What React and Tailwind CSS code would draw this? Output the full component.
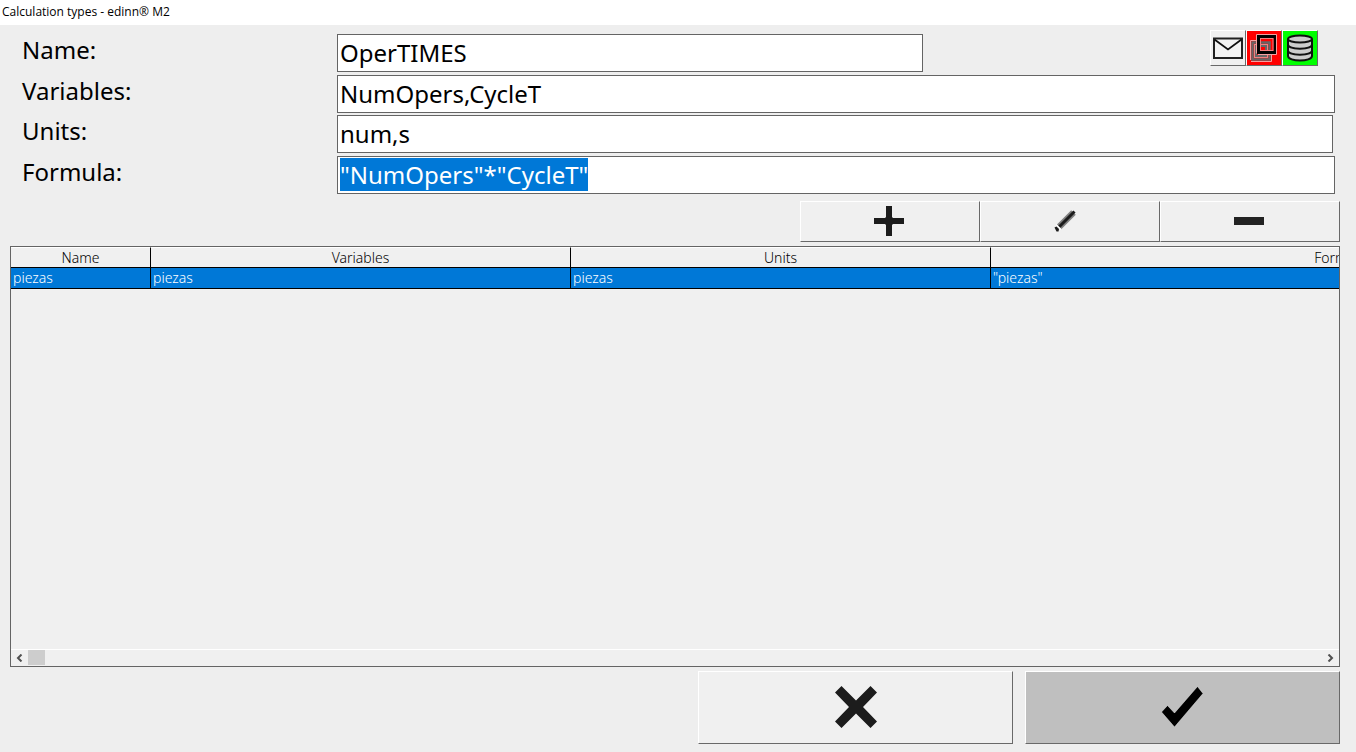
import { useEffect, useRef } from 'react';

const fields = [
  { id: 'name', label: 'Name:', value: 'OperTIMES', row: '', box: 'w-[586px]' },
  { id: 'variables', label: 'Variables:', value: 'NumOpers,CycleT', row: 'mt-[3px]', box: 'flex-1 mr-[21px]' },
  { id: 'units', label: 'Units:', value: 'num,s', row: 'mt-[2px]', box: 'flex-1 mr-[23px]' },
  { id: 'formula', label: 'Formula:', value: '"NumOpers"*"CycleT"', row: 'mt-[3px]', box: 'flex-1 mr-[21px]' },
];

const columns = [
  { title: 'Name', width: 'w-[140px]' },
  { title: 'Variables', width: 'w-[420px]' },
  { title: 'Units', width: 'w-[420px]' },
  { title: 'Formula', width: 'w-[700px]' },
];

const rows = [['piezas', 'piezas', 'piezas', '"piezas"']];

const raised = 'border border-t-white border-l-white border-r-[#696969] border-b-[#696969]';

/* ── Status icons ── */
function MailIcon() {
  return (
    <svg width="30" height="22" viewBox="0 0 30 22" fill="none" stroke="#111" strokeWidth="2">
      <rect x="1" y="1.500" width="28" height="19.500" fill="#f4f4f4" stroke="#222" />
      <path d="M1.500 2.500 L15 12.500 L28.500 2.500" strokeWidth="1.800" />
    </svg>
  );
}

function WindowsIcon() {
  return (
    <svg width="28" height="28" viewBox="0 0 28 28" fill="none">
      {/* back frame */}
      <rect x="2.500" y="8.500" width="17" height="17" stroke="#666" strokeWidth="2.500" />
      <path d="M0.500 26V6.500H7M21.500 20V27.500H1" stroke="#f3a0a0" />
      <rect x="4.500" y="10.500" width="13" height="13" stroke="#f08080" />
      <rect x="6" y="12" width="10" height="10" stroke="#666" strokeWidth="2" />
      {/* front frame */}
      <rect x="8.500" y="2.500" width="16.500" height="16" stroke="#000" strokeWidth="3" />
      <path d="M6.500 19.500V0.500H26.500V20.500H8" stroke="#f3a0a0" />
      <rect x="10.500" y="4.500" width="12.500" height="12" stroke="#f08080" />
    </svg>
  );
}

function DatabaseIcon() {
  return (
    <svg width="28" height="28" viewBox="0 0 28 28" fill="none" stroke="#111" strokeWidth="2">
      <path d="M2 5V22C2 28 26 28 26 22V5" fill="#ccc" />
      <ellipse cx="14" cy="5" rx="12" ry="3.5" fill="#ccc" />
      <path d="M2 10.5C2 16 26 16 26 10.5M2 16.5C2 22 26 22 26 16.5" />
    </svg>
  );
}

/* ── Action icons ── */
function PencilIcon() {
  return (
    <svg width="22" height="22" viewBox="0 0 22 22">
      <path d="M5 17 L19.500 2.500" stroke="#808080" strokeWidth="6.500" />
      <path d="M5 17 L20.500 1.500" stroke="#1c1c1c" strokeWidth="3" />
      <path d="M2 14.500 L7 19.500" stroke="#fff" strokeWidth="1.500" />
      <path d="M0.500 17.500 L2.500 16.500 L5 19 L4.500 21.500 H2.500 Z" fill="#1c1c1c" />
    </svg>
  );
}

function Arrow({ d }) {
  return (
    <svg width="7" height="8" viewBox="0 0 7 8" fill="none" stroke="#505050" strokeWidth="2">
      <path d={d} />
    </svg>
  );
}

function StatusButton({ label, color, children }) {
  return (
    <button type="button" aria-label={label} className={`flex size-9 items-center justify-center ${raised} ${color}`}>
      {children}
    </button>
  );
}

function ToolButton({ label, children }) {
  return (
    <button type="button" aria-label={label} className={`flex h-[41px] w-[180px] items-center justify-center bg-[#f0f0f0] pr-[2px] pb-[2px] ${raised}`}>
      {children}
    </button>
  );
}

export default function App() {
  const formulaRef = useRef(null);

  useEffect(() => {
    formulaRef.current.focus();
    formulaRef.current.select();
  }, []);

  return (
    <div className="flex h-screen flex-col bg-[#eeeeee] font-['Noto_Sans','Open_Sans',sans-serif] text-black">
      <header className="flex h-[25px] shrink-0 items-center bg-white pb-[2px] pl-[2px]">
        <h1 className="font-['Open_Sans','Noto_Sans',sans-serif] text-[12px] leading-4">Calculation types - edinn® M2</h1>
      </header>

      <form className="pt-[9px]">
        {fields.map(({ id, label, value, row, box }) => (
          <div key={id} className={`flex ${row}`}>
            <label htmlFor={id} className="w-[337px] shrink-0 pl-[22px] text-[24px] leading-8">{label}</label>
            <input
              id={id}
              ref={id === 'formula' ? formulaRef : null}
              defaultValue={value}
              className={`h-[38px] border border-[#646464] bg-white px-[2px] pb-[2px] text-[24px] leading-[30px] outline-none selection:bg-[#0078d7] selection:text-white ${box}`}
            />
            {id === 'name' && (
              <div className="-mt-1 mr-[38px] ml-auto flex h-9">
                <StatusButton label="Messages" color="bg-[#f0f0f0]"><MailIcon /></StatusButton>
                <StatusButton label="Windows" color="bg-[#ff0000]"><WindowsIcon /></StatusButton>
                <StatusButton label="Database" color="bg-[#00ff00]"><DatabaseIcon /></StatusButton>
              </div>
            )}
          </div>
        ))}
      </form>

      <div className="mt-[7px] mr-4 flex justify-end">
        <ToolButton label="Add">
          <svg width="30" height="30" viewBox="0 0 30 30" fill="#1c1c1c">
            <path d="M12 0h6v11l1 1h11v6H19l-1 1v11h-6V19l-1-1H0v-6h11l1-1z" />
          </svg>
        </ToolButton>
        <ToolButton label="Edit">
          <span className="pr-2"><PencilIcon /></span>
        </ToolButton>
        <ToolButton label="Remove">
          <svg width="30" height="8" viewBox="0 0 30 8"><rect width="30" height="8" fill="#222" /></svg>
        </ToolButton>
      </div>

      {/* Calculation list */}
      <div className="mt-1 mr-4 ml-[10px] flex min-h-0 flex-1 flex-col border border-[#646464] bg-[#f0f0f0]">
        <div className="flex-1 overflow-hidden">
          <table className="w-[1680px] table-fixed border-separate border-spacing-0 text-[14px] leading-5 font-light">
            <thead>
              <tr>
                {columns.map(({ title, width }) => (
                  <th key={title} className={`h-[21px] border-t border-r border-b border-t-white border-r-black border-b-black p-0 text-center leading-[19px] font-light ${width}`}>
                    {title}
                  </th>
                ))}
              </tr>
            </thead>
            <tbody>
              {rows.map((cells, i) => (
                <tr key={i} className="bg-[#0078d7] text-white">
                  {cells.map((cell, j) => (
                    <td key={j} className="h-[21px] border-r border-b border-black px-[2px] py-0">{cell}</td>
                  ))}
                </tr>
              ))}
            </tbody>
          </table>
        </div>
        <div className="flex h-[17px] shrink-0 items-start border-t border-white">
          <button type="button" aria-label="Scroll left" className="flex h-[15px] w-[17px] items-center justify-center">
            <Arrow d="M5.5 0.5L2 4L5.5 7.5" />
          </button>
          <div className="h-[15px] w-[17px] bg-[#cdcdcd]" />
          <button type="button" aria-label="Scroll right" className="ml-auto flex h-[15px] w-[17px] items-center justify-center">
            <Arrow d="M1.5 0.5L5 4L1.5 7.5" />
          </button>
        </div>
      </div>

      <footer className="mt-1 mr-4 mb-2 flex shrink-0 justify-end gap-3">
        <button type="button" aria-label="Cancel" className={`flex h-[73px] w-[315px] items-center justify-center bg-[#f0f0f0] pb-[2px] ${raised}`}>
          <svg width="42" height="42" viewBox="0 0 42 42" fill="#1c1c1c">
            <path d="M6.5 0L21 14.5L35.500 0L42 6.500L28 21L42 35.500L35.500 42L21 27.500L6.500 42L0 35.500L14 21L0 6.500Z" />
          </svg>
        </button>
        <button type="button" aria-label="Accept" className={`flex h-[73px] w-[315px] items-center justify-center bg-[#bfbfbf] pr-[2px] pb-[2px] ${raised}`}>
          <svg width="42" height="42" viewBox="0 0 42 42" fill="#000" stroke="#eee" strokeWidth="0.5">
            <path d="M36.500 0.500L42 7.500L13.500 41L0.500 26L6.500 19.500L13.500 27Z" />
          </svg>
        </button>
      </footer>
    </div>
  );
}
